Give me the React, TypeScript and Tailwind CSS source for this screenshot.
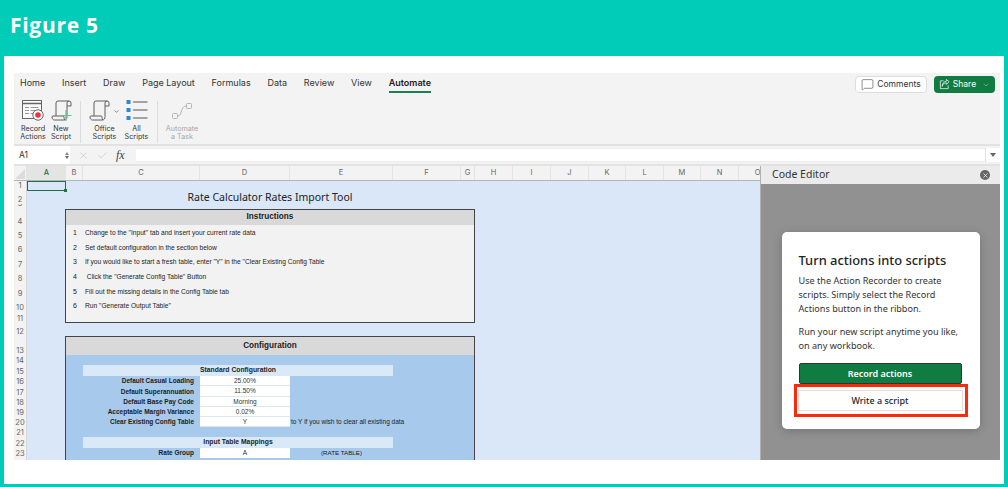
import React from "react";
import { Check, ChevronDown, MessageSquare, X } from "lucide-react";

const tabs = ["Home", "Insert", "Draw", "Page Layout", "Formulas", "Data", "Review", "View"];

const columns: [string, number][] = [
  ["B", 17], ["C", 117], ["D", 90], ["E", 103], ["F", 68], ["G", 14], ["H", 38], ["I", 38],
  ["J", 38], ["K", 37], ["L", 38], ["M", 37], ["N", 38], ["O", 38],
];

const rows: [number, number][] = [
  [1, 10], [2, 13], [3, 4], [4, 18], [5, 14], [6, 14], [7, 15], [8, 14], [9, 15], [10, 14], [11, 11], [12, 13],
  [13, 19], [14, 10], [15, 11], [16, 10], [17, 11], [18, 10], [19, 10], [20, 10], [21, 10], [22, 11], [23, 10],
];

const instructions: [string, number][] = [
  ['Change to the "Input" tab and insert your current rate data', 14],
  ["Set default configuration in the section below", 15],
  ['If you would like to start a fresh table, enter "Y" in the "Clear Existing Config Table', 14],
  ['\u00a0Click the "Generate Config Table" Button', 15],
  ["Fill out the missing details in the Config Table tab", 15],
  ['Run "Generate Output Table"', 14],
];

function ScrollIcon({ plus }: { plus?: boolean }) {
  return (
    <svg width="21" height="22" viewBox="0 0 21 22" fill="none" stroke="#5f5f5f" strokeWidth="1" className="overflow-visible">
      <path d="M5 16V3a2 2 0 0 1 2-2h11a2 2 0 0 1 2 2v3h-4" />
      <path d="M16 3a2 2 0 0 1 2-2M16 3v13.500c0 2-.8 3.500-2.500 3.500H3.500C1.800 20 1 18.500 1 17c0-.6.4-1 1-1h10c.6 0 1 .4 1 1 0 1.300.2 2.200.8 3" />
      {plus && <path d="M15 10v11M9.500 15.500h11" stroke="#6cc08b" strokeWidth="1.200" />}
    </svg>
  );
}

function RecordIcon() {
  return (
    <svg width="22" height="21" viewBox="0 0 22 21" fill="none" className="overflow-visible">
      <rect x="0.500" y="0.500" width="19" height="18" fill="#fbfbfb" stroke="#666" />
      <path d="M0.500 3.500h19" stroke="#666" strokeWidth="1.500" />
      <path d="M3 7.500h4M8.500 7.500h8M3 10.500h4M8.500 10.500h6M3 13.500h4M8.500 13.500h3" stroke="#999" />
      <circle cx="16" cy="15" r="5.200" fill="#fff" stroke="#666" />
      <circle cx="16" cy="15" r="2.800" fill="#f0323c" />
    </svg>
  );
}

function ListIcon() {
  return (
    <svg width="22" height="20" viewBox="0 0 22 20">
      <rect x="0.500" y="0" width="4" height="4" fill="#2b88d8" />
      <rect x="0.500" y="8" width="4" height="4" fill="#2b88d8" />
      <rect x="0.500" y="16" width="4" height="4" fill="#2b88d8" />
      <path d="M7 2h14.500M7 10h14.500M7 18h14.500" stroke="#555" strokeWidth="1" />
    </svg>
  );
}

function FlowIcon() {
  return (
    <svg width="22" height="18" viewBox="0 0 22 18" fill="none" stroke="#b5b5b5">
      <rect x="1.500" y="11.500" width="5" height="5" rx="1" />
      <rect x="15.500" y="1.500" width="5" height="5" rx="1" />
      <path d="M6.500 14c3 0 3-2 4-5s2-5 5-5" />
    </svg>
  );
}

function ShareIcon() {
  return (
    <svg width="11" height="11" viewBox="0 0 12 12" fill="none" stroke="#fff" strokeWidth="0.800">
      <path d="M5 2H1.500v8.500h8.500V7" />
      <path d="M3.500 8c.5-2.500 2-3.800 4.500-3.800V6l3-3-3-2.500v2C5 2.800 3.500 5 3.500 8z" />
    </svg>
  );
}

function RibbonButton({ icon, lines, muted, w }: { icon: React.ReactNode; lines: [string, string]; muted?: boolean; w: string }) {
  return (
    <div className={`flex ${w} flex-col items-center ${muted ? "text-[#a8a8a8]" : "text-[#333]"}`}>
      <div className="flex h-[23px] items-start">{icon}</div>
      <div className="mt-[2px] text-center text-[7.200px] leading-[8.300px] whitespace-nowrap">
        <div>{lines[0]}</div>
        <div>{lines[1]}</div>
      </div>
    </div>
  );
}

function ConfigRow({ label, value, note, h = "h-[10px]" }: { label: string; value: string; note?: string; h?: string }) {
  return (
    <div className={`flex ${h} items-center text-[6.500px] leading-[10px]`}>
      <div className="w-[117px] pr-[6px] text-right font-bold whitespace-nowrap text-[#1c1c1c]">{label}</div>
      <div className="h-full w-[90px] border-b border-[#dfe6ee] bg-white text-center text-[#333]">{value}</div>
      {note && <div className="pl-px whitespace-nowrap text-[#222]">{note}</div>}
    </div>
  );
}

function SectionHead({ title, h }: { title: string; h: string }) {
  return (
    <div className={`flex ${h} w-[310px] items-center justify-center bg-[#dae9f8] text-[6.800px] font-bold text-[#1c1c1c]`}>
      {title}
    </div>
  );
}

export default function App() {
  return (
    <div className="flex h-[487px] w-[1008px] flex-col overflow-hidden bg-[#00ccb8] font-['Inter',sans-serif]">
      <div className="flex h-[56px] shrink-0 items-center pb-[5px] pl-[10px] font-['Open_Sans',sans-serif] text-[21px] font-bold tracking-[0.7px] text-white">
        Figure 5
      </div>

      <div className="mx-[4px] mb-[3px] flex min-h-0 flex-1 flex-col bg-white pt-[17px] pr-[4px] pb-[24px] pl-[10px]">
        <div className="flex min-h-0 flex-1 flex-col bg-[#f3f3f3]">
          {/* tabs */}
          <div className="flex h-[23px] shrink-0 items-start justify-between pr-[5px] pl-[6px]">
            <div className="flex gap-[16.800px] pt-[4px] text-[9px] leading-[12px] text-[#333]">
              {tabs.map((t) => (
                <span key={t}>{t}</span>
              ))}
              <span className="border-b-2 border-[#1e7f52] pb-[2px] font-semibold text-[#222]">Automate</span>
            </div>
            <div className="flex gap-[7px] pt-[3px]">
              <div className="flex h-[17px] w-[72px] items-center justify-center gap-[3px] rounded-[4px] border border-[#ddd] bg-white text-[8.500px] text-[#333]">
                <MessageSquare size={13} strokeWidth={1} />
                Comments
              </div>
              <div className="flex h-[17px] w-[61px] items-center justify-center gap-[3px] rounded-[4px] bg-[#107c41] text-[8.500px] text-white">
                <ShareIcon />
                Share
                <ChevronDown size={8} strokeWidth={1} className="ml-[3px]" />
              </div>
            </div>
          </div>

          {/* ribbon */}
          <div className="flex h-[48px] shrink-0 items-start pt-[4px] pl-[5px]">
            <RibbonButton w="w-[28px]" icon={<RecordIcon />} lines={["Record", "Actions"]} />
            <RibbonButton w="w-[28px]" icon={<ScrollIcon plus />} lines={["New", "Script"]} />
            <div className="mt-[1px] ml-[5px] h-[42px] w-px bg-[#dcdcdc]" />
            <div className="ml-[7px]">
              <RibbonButton
                w="w-[33px]"
                icon={
                  <span className="flex items-center">
                    <ScrollIcon />
                    <ChevronDown size={7} strokeWidth={2} className="ml-[3px] text-[#444]" />
                  </span>
                }
                lines={["Office", "Scripts"]}
              />
            </div>
            <div className="ml-px">
              <RibbonButton w="w-[29px]" icon={<ListIcon />} lines={["All", "Scripts"]} />
            </div>
            <div className="mt-[1px] ml-[6px] h-[42px] w-px bg-[#dcdcdc]" />
            <div className="ml-[4px]">
              <RibbonButton w="w-[40px]" icon={<div className="pt-[2px]"><FlowIcon /></div>} lines={["Automate", "a Task"]} muted />
            </div>
          </div>

          {/* formula bar */}
          <div className="flex h-[22px] shrink-0 items-stretch border-t-2 border-b-[2px] border-[#e2e2e2]">
            <div className="flex w-[56px] items-center justify-between bg-white pr-[1px] pl-[5px] text-[8.500px] text-[#333]">
              A1
              <span className="flex flex-col gap-[1px]">
                <span className="h-0 w-0 border-x-[2.500px] border-b-[3px] border-x-transparent border-b-[#888]" />
                <span className="h-0 w-0 border-x-[2.500px] border-t-[3px] border-x-transparent border-t-[#666]" />
              </span>
            </div>
            <div className="flex w-[66px] items-center gap-[8px] pl-[8px] text-[#c4c4c4]">
              <X size={11} strokeWidth={1.500} />
              <Check size={11} strokeWidth={1.500} />
              <span className="font-['Liberation_Serif',serif] text-[12px] text-[#444] italic">fx</span>
            </div>
            <div className="my-[2px] flex-1 border-y border-[#eee] bg-white" />
            <div className="my-[2px] flex w-[15px] items-center justify-center border-l border-[#e2e2e2] bg-white">
              <span className="h-0 w-0 border-x-[3px] border-t-[4px] border-x-transparent border-t-[#666]" />
            </div>
          </div>

          {/* sheet and side panel */}
          <div className="flex min-h-0 flex-1">
            <div className="flex w-[746px] flex-col">
              <div className="flex h-[15px] shrink-0 overflow-hidden border-b border-[#b5b5b5] text-[7.500px] text-[#666]">
                <div className="flex w-[13px] shrink-0 items-end justify-end border-r border-[#e4e4e4] p-px">
                  <span className="h-0 w-0 border-b-[10px] border-l-[10px] border-b-[#dcdcdc] border-l-transparent" />
                </div>
                <div className="flex w-[39px] shrink-0 items-center justify-center bg-[#e4e4e4] font-medium text-[#1e7145]">A</div>
                {columns.map(([name, w]) => (
                  <div key={name} style={{ width: w }} className="flex shrink-0 items-center justify-center border-r border-[#e4e4e4]">
                    {name}
                  </div>
                ))}
              </div>
              <div className="flex min-h-0 flex-1 overflow-hidden">
                <div className="w-[13px] shrink-0 border-r border-[#d8d8d8] bg-[#f3f3f3] text-[7.500px] text-[#666]">
                  {rows.map(([n, h]) => (
                    <div key={n} style={{ height: h }} className="flex items-end justify-center overflow-hidden leading-[8.500px] first:items-center">
                      {n}
                    </div>
                  ))}
                </div>
                <div className="relative min-w-0 flex-1 overflow-hidden bg-[#dae7f8] pl-[38px] font-['Liberation_Sans',sans-serif]">
                  <div className="absolute top-0 left-0 h-[10px] w-[39px] border-[1.500px] border-[#1e7145]">
                    <span className="absolute -right-[2px] -bottom-[2px] h-[3px] w-[3px] bg-[#1e7145]" />
                  </div>

                  <div className="mt-[9px] flex h-[15px] w-[410px] items-center justify-center font-['Noto_Sans',sans-serif] text-[10.500px] text-[#222]">
                    Rate Calculator Rates Import Tool
                  </div>

                  <div className="mt-[4px] h-[114px] w-[410px] border border-[#444] bg-[#f2f2f2]">
                    <div className="flex h-[15px] items-center justify-center bg-[#d9d9d9] text-[8.200px] font-bold text-[#222]">
                      Instructions
                    </div>
                    <div className="pt-[1px]">
                      {instructions.map(([text, h], i) => (
                        <div key={i} style={{ height: h }} className="flex items-center text-[6.650px] leading-[10px] whitespace-pre text-[#222]">
                          <span className="w-[19px] pr-[1px] text-center text-[7px] leading-[10px]">{i + 1}</span>
                          <span>{text}</span>
                        </div>
                      ))}
                    </div>
                  </div>

                  <div className="mt-[13px] w-[410px] border-x border-t border-[#444] bg-[#a6c9ec]">
                    <div className="flex h-[18px] items-center justify-center bg-[#d9d9d9] text-[8.200px] font-bold text-[#222]">
                      Configuration
                    </div>
                    <div className="pt-[10px] pb-[8px] pl-[17px]">
                      <SectionHead title="Standard Configuration" h="h-[11px]" />
                      <ConfigRow label="Default Casual Loading" value="25.00%" />
                      <ConfigRow label="Default Superannuation" value="11.50%" h="h-[11px]" />
                      <ConfigRow label="Default Base Pay Code" value="Morning" />
                      <ConfigRow label="Acceptable Margin Variance" value="0.02%" />
                      <ConfigRow label="Clear Existing Config Table" value="Y" note="to Y if you wish to clear all existing data" />
                      <div className="h-[10px]" />
                      <SectionHead title="Input Table Mappings" h="h-[11px]" />
                      <div className="flex h-[10px] items-center text-[6.500px] leading-[10px]">
                        <div className="w-[117px] pr-[6px] text-right font-bold text-[#1c1c1c]">Rate Group</div>
                        <div className="h-full w-[90px] bg-white text-center text-[#333]">A</div>
                        <div className="w-[103px] text-center text-[6.200px] text-[#222]">(RATE TABLE)</div>
                      </div>
                    </div>
                  </div>
                </div>
              </div>
            </div>

            {/* code editor panel */}
            <div className="flex w-[240px] flex-col border-l border-[#b0b0b0]">
              <div className="flex h-[18px] shrink-0 items-center justify-between bg-[#ebebeb] pr-[10px] pl-[11px] font-['Noto_Sans',sans-serif] text-[10.500px] text-[#333]">
                Code Editor
                <span className="flex h-[10px] w-[10px] items-center justify-center rounded-full bg-[#666]">
                  <X size={7} strokeWidth={2.500} className="text-white" />
                </span>
              </div>
              <div className="flex min-h-0 flex-1 items-start justify-center bg-[#919191] pt-[48px] font-['Noto_Sans',sans-serif]">
                <div className="h-[197px] w-[198px] rounded-[5px] bg-white px-[17px] pt-[18px] shadow-[0_2px_10px_rgba(0,0,0,0.2)]">
                  <div className="text-[12.900px] leading-[20px] font-medium whitespace-nowrap text-[#242424]">Turn actions into scripts</div>
                  <div className="mt-[4px] text-[9.100px] leading-[14px] whitespace-nowrap text-[#333]">
                    <p>Use the Action Recorder to create</p>
                    <p>scripts. Simply select the Record</p>
                    <p>Actions button in the ribbon.</p>
                    <p className="mt-[9px]">Run your new script anytime you like,</p>
                    <p>on any workbook.</p>
                  </div>
                  <div className="mt-[10px] flex h-[21px] w-[163px] items-center justify-center rounded-[2px] border border-[#333] bg-[#107c41] text-[9px] font-semibold text-white">
                    Record actions
                  </div>
                  <div className="-mx-[5px] border-[3px] border-[#fa2a0a] py-[3px] pr-[2px] pl-px">
                    <div className="flex h-[21px] items-center justify-center border border-[#f0d8d4] bg-white text-[9px] font-medium text-[#242424]">
                      Write a script
                    </div>
                  </div>
                </div>
              </div>
            </div>
          </div>
        </div>
      </div>
    </div>
  );
}
